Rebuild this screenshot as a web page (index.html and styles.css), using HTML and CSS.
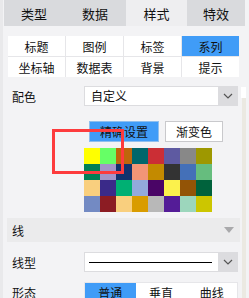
FILE: index.html
```html
<!DOCTYPE html>
<html lang="zh-CN">

<head>
    <meta charset="UTF-8">
    <meta name="viewport" content="width=device-width, initial-scale=1.0">
    <title>系列样式</title>
    <link rel="stylesheet" href="styles.css">
</head>

<body>

    <div class="panel">
        <div class="main">
            <!-- 顶部大标签 -->
            <div class="tabs">
                <div class="tab">类型</div>
                <div class="tab">数据</div>
                <div class="tab active">样式</div>
                <div class="tab">特效</div>
            </div>

            <!-- 子标签 -->
            <div class="subtabs">
                <div class="subtab">标题</div>
                <div class="subtab">图例</div>
                <div class="subtab">标签</div>
                <div class="subtab active">系列</div>
                <div class="subtab">坐标轴</div>
                <div class="subtab">数据表</div>
                <div class="subtab">背景</div>
                <div class="subtab">提示</div>
            </div>

            <div class="row first">
                <div class="label">配色</div>
                <div class="select">
                    <span class="value">自定义</span>
                    <span class="arrow">
                        <svg width="10" height="6" viewBox="0 0 10 6"><path d="M1 1 L5 5 L9 1" fill="none" stroke="#555" stroke-width="1.2"/></svg>
                    </span>
                </div>
            </div>

            <div class="btn-row">
                <div class="btn primary">精确设置</div>
                <div class="btn">渐变色</div>
            </div>

            <div class="palette" id="palette"></div>

            <div class="section">
                <span>线</span>
                <svg class="caret" width="10" height="6" viewBox="0 0 10 6"><path d="M0 0 L10 0 L5 6 Z" fill="#a9a9ab"/></svg>
            </div>

            <div class="row">
                <div class="label">线型</div>
                <div class="select">
                    <span class="line"></span>
                    <span class="arrow">
                        <svg width="10" height="6" viewBox="0 0 10 6"><path d="M1 1 L5 5 L9 1" fill="none" stroke="#555" stroke-width="1.2"/></svg>
                    </span>
                </div>
            </div>

            <div class="row">
                <div class="label">形态</div>
                <div class="segments">
                    <div class="seg active">普通</div>
                    <div class="seg">垂直</div>
                    <div class="seg">曲线</div>
                </div>
            </div>

            <!-- 红框标注 -->
            <div class="mark"></div>
        </div>

        <div class="scroll">
            <div class="thumb"></div>
            <div class="track"></div>
        </div>
    </div>

    <script>
        // 配色表
        var colors = [
            "#ffff00", "#66ff66", "#bf660b", "#00666b", "#cb2e35", "#5e5aa1", "#888888", "#9e9800",
            "#008055", "#a395c8", "#12326d", "#f29576", "#c38a00", "#333333", "#4470b8", "#66bd7e",
            "#f9cf7e", "#3a2a89", "#00b073", "#93aadb", "#4a0566", "#fbf14c", "#935406", "#00623c",
            "#738ac3", "#8c1c23", "#f9cf7e", "#d99c00", "#b8b8b8", "#541c97", "#9cd6bc", "#ccc600"
        ];

        var palette = document.getElementById("palette");
        colors.forEach(function (c) {
            var cell = document.createElement("div");
            cell.className = "cell";
            cell.style.background = c;
            palette.appendChild(cell);
        });
    </script>

</body>

</html>
```

FILE: styles.css
```css
body {
    margin: 0;
    padding: 0;
    width: 249px;
    height: 298px;
    overflow: hidden;
    background-color: #f3f3f5;
    font-family: "Noto Sans CJK SC", "Noto Sans", sans-serif;
    font-size: 12px;
    color: #111;
}

.panel {
    display: flex;
    height: 298px;
    border-left: 3px solid #e9e9eb;
}

.main {
    position: relative;
    width: 236px;
    padding-left: 1px;
}

.tabs {
    display: grid;
    grid-template-columns: 60px 62px 61px 58px;
    height: 26px;
    background-color: #d9dadd;
    width: 241px;
    position: relative;
    z-index: 1;
}

.tab {
    display: flex;
    align-items: center;
    justify-content: center;
    font-size: 13px;
}

.tab.active {
    background-color: #eeeef0;
}

.subtabs {
    display: grid;
    grid-template-columns: repeat(4, 1fr);
    gap: 1px;
    margin: 10px 0 0 4px;
    width: 231px;
    background-color: #e6e6e9;
}

.subtab {
    height: 20px;
    display: flex;
    align-items: center;
    justify-content: center;
    background-color: #fff;
    font-size: 12px;
}

.subtab.active {
    background-color: #409cf7;
}

.row {
    display: flex;
    align-items: center;
    height: 20px;
    margin-top: 10px;
}

.row.first {
    margin-top: 9px;
}

.label {
    width: 80px;
    padding-left: 8px;
    box-sizing: border-box;
}

.select {
    display: flex;
    width: 154px;
    height: 20px;
    box-sizing: border-box;
    border: 1px solid #dcdcdf;
    background-color: #fff;
}

.select .value {
    flex: 1;
    padding-left: 6px;
    line-height: 18px;
}

.select .line {
    flex: 1;
    margin: 0 6px 0 4px;
    align-self: center;
    border-top: 1px solid #000;
}

.select .arrow {
    width: 19px;
    display: flex;
    align-items: center;
    justify-content: center;
    background-color: #dcdcdf;
}

.btn-row {
    display: flex;
    gap: 6px;
    margin: 15px 0 0 85px;
}

.btn {
    height: 19px;
    padding: 0 10px;
    display: flex;
    align-items: center;
    border: 1px solid #c9c9cc;
    background-color: #fff;
    font-size: 12px;
}

.btn.primary {
    background-color: #409cf7;
    border-color: #8fbfee;
}

.palette {
    display: grid;
    grid-template-columns: repeat(8, 16px);
    grid-auto-rows: 16px;
    margin: 6px 0 0 80px;
    width: 128px;
}

.section {
    display: flex;
    align-items: center;
    justify-content: space-between;
    height: 24px;
    margin: 6px 0 0 3px;
    padding: 0 6px 0 5px;
    background-color: #ebebec;
}

.segments {
    display: flex;
    width: 154px;
    height: 20px;
    background-color: #fff;
    border: 1px solid #e6e6e9;
    box-sizing: border-box;
}

.seg {
    flex: 1;
    display: flex;
    align-items: center;
    justify-content: center;
}

.seg.active {
    background-color: #409cf7;
}

.mark {
    position: absolute;
    left: 49px;
    top: 129px;
    width: 66px;
    height: 39px;
    border: 3px solid #fd3b3d;
}

.scroll {
    width: 10px;
    padding-top: 87px;
    display: flex;
    flex-direction: column;
    align-items: flex-start;
}

.thumb {
    width: 5px;
    height: 11px;
    margin-left: 1px;
    background-color: #fff;
}

.track {
    width: 4px;
    flex: 1;
    margin-left: 2px;
    background-color: #ebe9e2;
}
```
